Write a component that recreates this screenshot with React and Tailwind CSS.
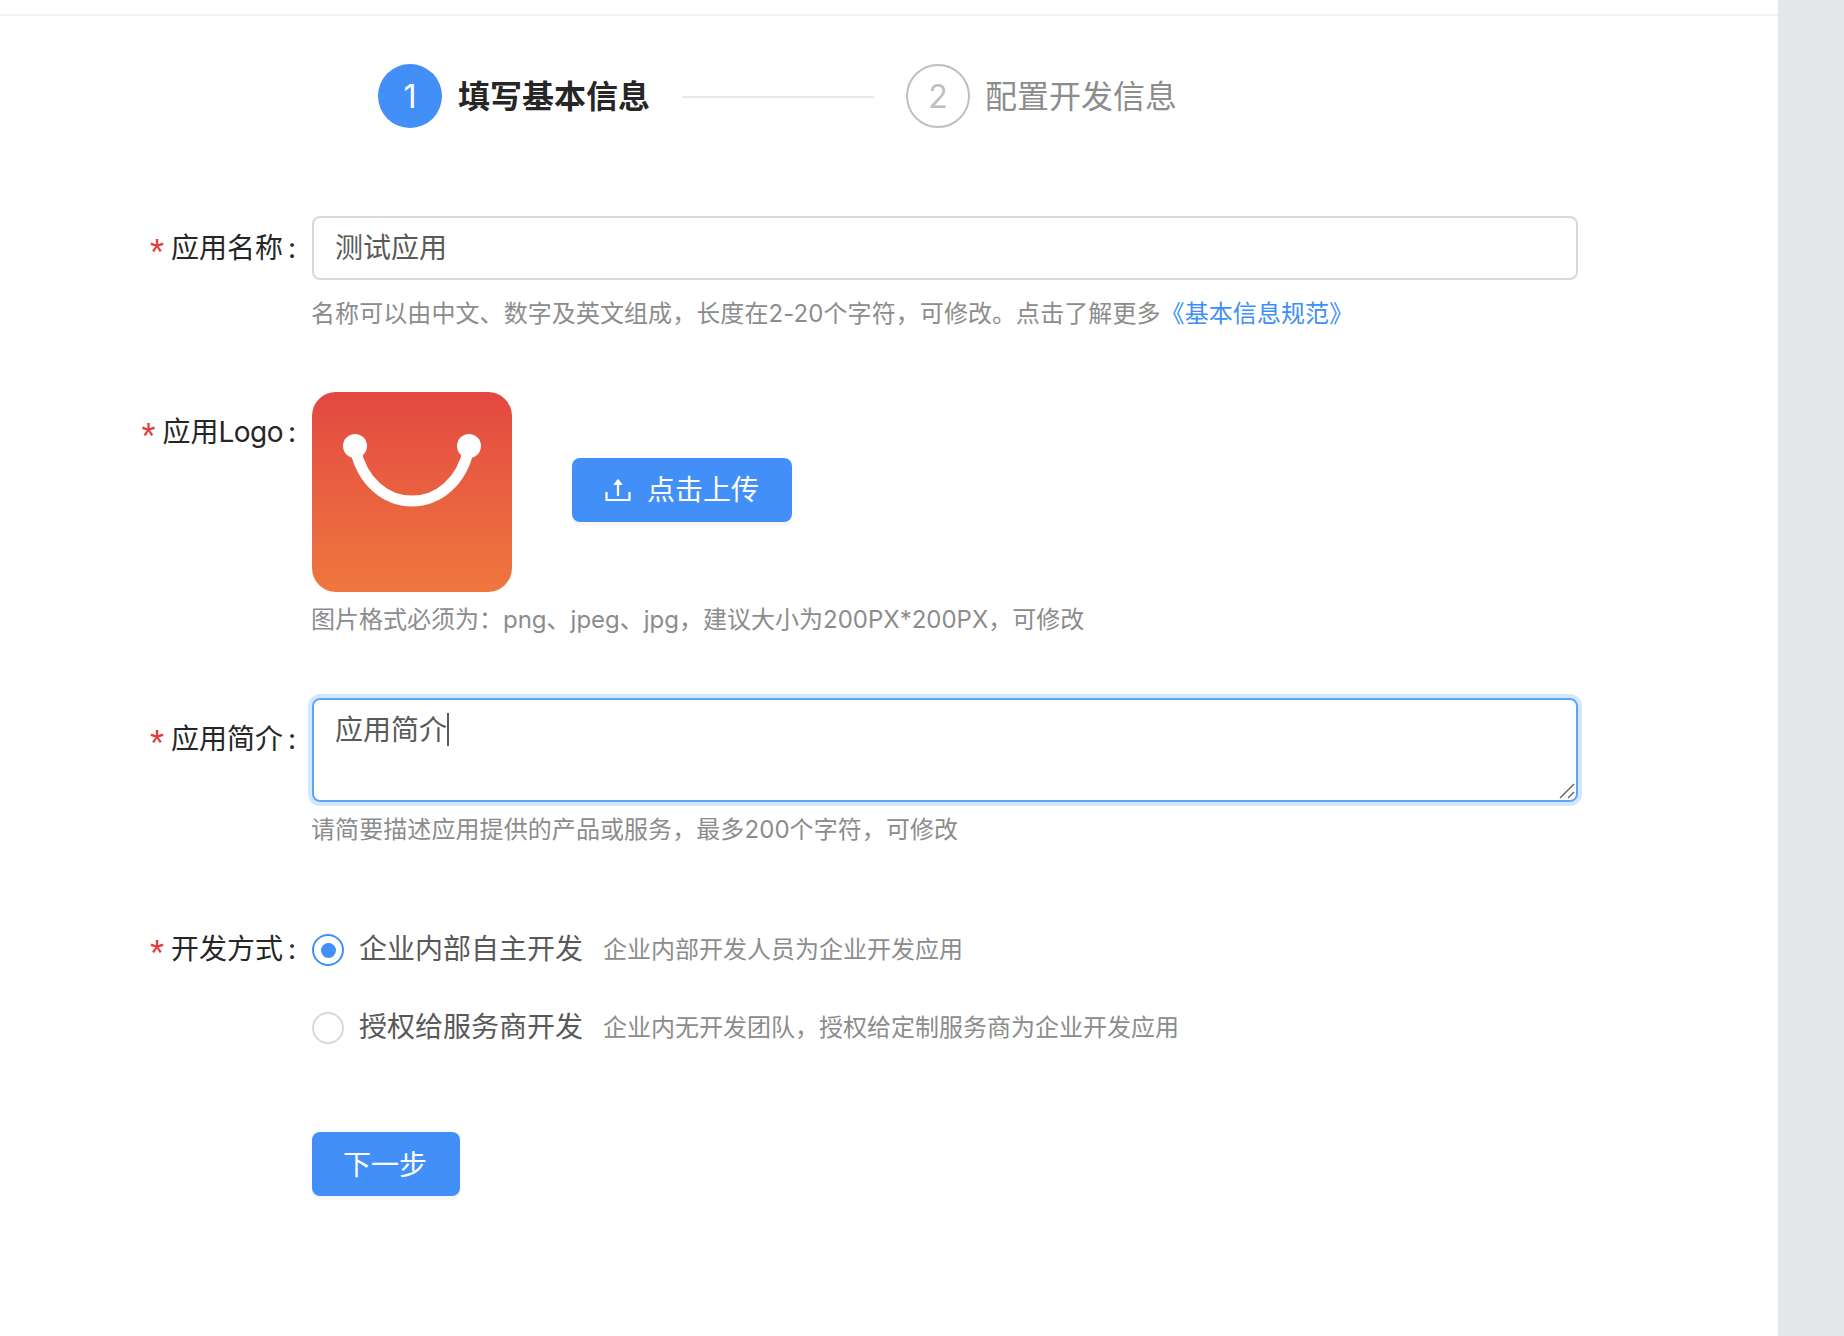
const FONT = "[font-family:Inter,'Noto_Sans_CJK_SC',sans-serif]";

function Label({ children, className = "" }) {
  return (
    <div className={`w-[296px] mr-4 shrink-0 flex justify-end items-center h-10 text-[28px] leading-10 text-[#262626] ${className}`}>
      <span className="text-[#e5383b] mr-[7px] text-[36px] leading-10 [font-family:'Liberation_Sans',sans-serif] translate-y-[5px]">*</span>
      <span>{children}</span>
      <span className="ml-[5px] w-[8px] text-center font-normal">:</span>
    </div>
  );
}

function Hint({ children, className = "" }) {
  return <div className={`-ml-px text-2xl leading-9 text-[#8c8c8c] ${className}`}>{children}</div>;
}

function Radio({ checked, label, note }) {
  return (
    <div className="flex items-center h-10">
      <span className={`mt-[2px] w-8 h-8 rounded-full border-2 flex items-center justify-center ${checked ? "border-[#4290f7]" : "border-[#d9d9d9]"}`}>
        {checked && <span className="w-[15px] h-[15px] rounded-full bg-[#4290f7]" />}
      </span>
      <span className="ml-[15px] text-[28px] leading-10 text-[#595959]">{label}</span>
      <span className="ml-5 pt-[2px] text-2xl leading-10 text-[#8c8c8c]">{note}</span>
    </div>
  );
}

export default function App() {
  return (
    <div className={`flex h-[1336px] w-full overflow-hidden bg-[#e5e6ea] ${FONT}`}>
      <main className="w-[1778px] shrink-0 bg-white">
        <div className="h-4 border-b-2 border-[#f2f2f2]" />

        <div className="mt-12 ml-[378px] flex items-center h-16">
          <span className="w-16 h-16 pt-[2px] rounded-full bg-[#4290f7] text-white text-[32px] flex items-center justify-center">1</span>
          <span className="ml-4 pt-[2px] text-[32px] font-semibold text-[#262626]">填写基本信息</span>
          <span className="ml-8 mt-[2px] w-[192px] h-[2px] bg-[#e8e8e8]" />
          <span className="ml-8 w-16 h-16 pt-[2px] rounded-full border-2 border-[#bfbfbf] text-[#bfbfbf] text-[32px] flex items-center justify-center">2</span>
          <span className="ml-[15px] pt-[2px] text-[32px] text-[#8c8c8c]">配置开发信息</span>
        </div>

        <div className="mt-[88px] flex items-start">
          <Label className="mt-3">应用名称</Label>
          <div className="w-[1266px]">
            <div className="h-16 border-2 border-[#d9d9d9] rounded-lg px-[21px] flex items-center text-[28px] text-[#595959]">测试应用</div>
            <Hint className="mt-4 tracking-[0.08px]">
              名称可以由中文、数字及英文组成，长度在2-20个字符，可修改。点击了解更多<span className="text-[#3d8ff5]">《基本信息规范》</span>
            </Hint>
          </div>
        </div>

        <div className="mt-[60px] flex items-start">
          <Label className="mt-5">应用<span className="tracking-[-0.5px]">Logo</span></Label>
          <div>
            <div className="flex items-start">
              <div className="w-[200px] h-[200px] rounded-3xl bg-linear-to-b from-[#e34741] to-[#ef773e]">
                <svg className="blur-[0.5px]" width="200" height="200" viewBox="0 0 200 200" fill="none">
                  <path d="M43 56C50 90 74 109 100 109C126 109 150 90 157 56" stroke="#fff" strokeWidth="11" strokeLinecap="round" />
                  <circle cx="43" cy="54" r="12" fill="#fff" />
                  <circle cx="157" cy="54" r="12" fill="#fff" />
                </svg>
              </div>
              <button className="ml-[60px] mt-[66px] w-[220px] h-16 rounded-lg bg-[#4290f7] text-white text-[28px] flex items-center justify-center shadow-[0_4px_0_rgba(0,0,0,0.03)]">
                <svg width="26" height="24" viewBox="0 0 26 24" fill="none" stroke="#fff" strokeWidth="2.2">
                  <path d="M1.5 14V22H24.5V14" />
                  <path d="M13 18V2" />
                  <path d="M9 6.5L13 1.5L17 6.5Z" fill="#fff" strokeWidth="1" />
                </svg>
                <span className="ml-[16px]">点击上传</span>
              </button>
            </div>
            <Hint className="mt-[10px]">图片格式必须为：png、jpeg、jpg，建议大小为200PX*200PX，可修改</Hint>
          </div>
        </div>

        <div className="mt-[60px] flex items-start">
          <Label className="mt-[21px]">应用简介</Label>
          <div className="w-[1266px]">
            <div className="relative h-[104px]">
              <textarea
                readOnly
                value="应用简介"
                className="block w-full h-full resize-none rounded-lg border-2 border-[#5ca5f8] shadow-[0_0_0_4px_rgba(66,144,247,0.22)] outline-none px-[21px] py-[10px] text-[28px] leading-10 text-[#595959]"
              />
              <span className="absolute left-[135px] top-[15px] w-[2px] h-[33px] bg-[#595959]" />
              <svg className="absolute right-[3px] bottom-[3px]" width="16" height="16" viewBox="0 0 16 16" stroke="#666" strokeWidth="1.4">
                <path d="M1 15L15 1" />
                <path d="M9 15L15 9" />
              </svg>
            </div>
            <Hint className="mt-[10px] tracking-[0.08px]">请简要描述应用提供的产品或服务，最多200个字符，可修改</Hint>
          </div>
        </div>

        <div className="mt-[81px] flex items-start">
          <Label>开发方式</Label>
          <div className="flex flex-col gap-[38px]">
            <Radio checked label="企业内部自主开发" note="企业内部开发人员为企业开发应用" />
            <Radio label="授权给服务商开发" note="企业内无开发团队，授权给定制服务商为企业开发应用" />
          </div>
        </div>

        <button className="mt-[85px] ml-[312px] w-[148px] h-16 pr-[2px] pt-[2px] rounded-lg bg-[#4290f7] text-white text-[28px] flex items-center justify-center shadow-[0_4px_0_rgba(0,0,0,0.03)]">
          下一步
        </button>
      </main>
    </div>
  );
}
